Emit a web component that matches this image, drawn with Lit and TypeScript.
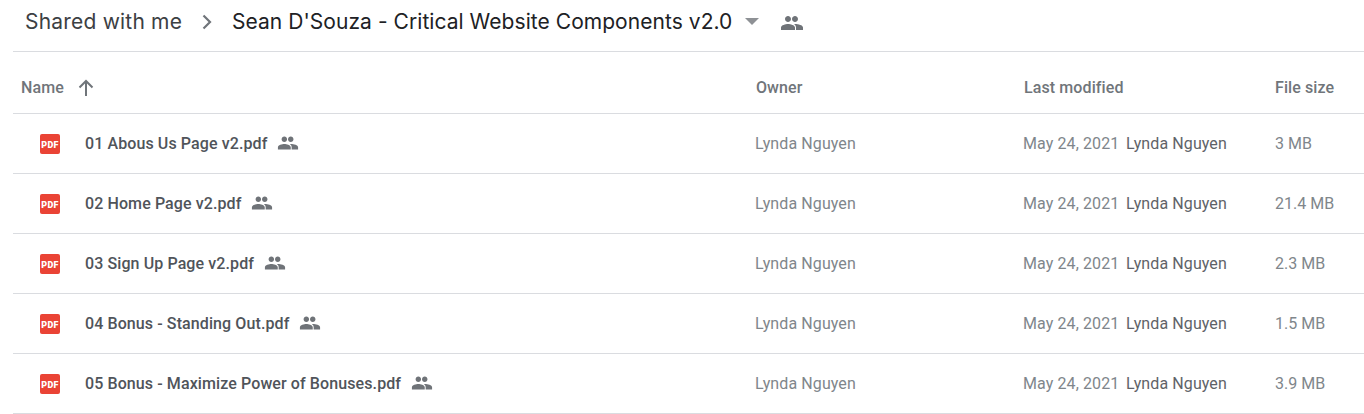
import { LitElement, html, css } from "lit";
import { customElement } from "lit/decorators.js";

const people = (size: number, cls = "") => html`<svg class=${cls} width=${size} height=${size} viewBox="0 0 24 24" fill="#6f7378"><path d="M15 11c1.66 0 2.99-1.34 2.99-3S16.66 5 15 5s-3 1.34-3 3 1.34 3 3 3zm-7 0c1.66 0 2.99-1.34 2.99-3S9.66 5 8 5 5 6.34 5 8s1.34 3 3 3zm0 2c-2.33 0-7 1.17-7 3.5V19h14v-2.5C15 14.17 10.33 13 8 13zm7 0c-.29 0-.62.02-.97.05 1.16.84 1.97 1.97 1.97 3.45V19h7v-2.5c0-2.33-4.67-3.5-8-3.5z"/></svg>`;

const pdf = html`<svg width="20" height="20" viewBox="0 0 20 20"><rect width="20" height="20" rx="2" fill="#ea4335"/><text x="10" y="13.500" text-anchor="middle" font-family="Roboto, sans-serif" font-size="9" font-weight="900" fill="#fff" letter-spacing="0.3">PDF</text></svg>`;

const files = [
  ["01 Abous Us Page v2.pdf", "3 MB"],
  ["02 Home Page v2.pdf", "21.4 MB"],
  ["03 Sign Up Page v2.pdf", "2.3 MB"],
  ["04 Bonus - Standing Out.pdf", "1.5 MB"],
  ["05 Bonus - Maximize Power of Bonuses.pdf", "3.9 MB"],
];

@customElement("app-root")
export class AppRoot extends LitElement {
  static styles = css`
    :host { display: block; width: 1364px; height: 414px; overflow: hidden; background: #fff; font-family: Roboto, sans-serif; }
    .crumbs { height: 43px; padding-bottom: 8px; margin-left: 13px; padding-left: 12px; display: flex; align-items: center; border-bottom: 1px solid #dadce0; font-family: Inter, "Open Sans", sans-serif; font-size: 21px; }
    .parent { color: #3c4043; width: 158px; white-space: nowrap; letter-spacing: 0.2px; }
    .chev { margin-left: 18px; margin-right: 19px; display: block; }
    .current { color: #202124; white-space: nowrap; letter-spacing: 0.05px; }
    .caret { margin-left: 13px; width: 0; height: 0; border-left: 7px solid transparent; border-right: 7px solid transparent; border-top: 7px solid #8e9195; }
    .share { margin-left: 21px; display: block; margin-top: 2px; }
    .row { display: grid; grid-template-columns: 742px 268px 103px 1fr; margin-left: 13px; height: 59px; align-items: center; border-bottom: 1px solid #dadce0; font-size: 16px; letter-spacing: 0.1px; color: #80868b; white-space: nowrap; }
    .head { height: 51px; padding-top: 10px; font-weight: 500; color: #70757a; }
    .head .name { padding-left: 8px; display: flex; align-items: center; gap: 12px; }
    .head .owner { padding-left: 1px; }
    .head .mod { grid-column: 3 / span 2; display: flex; padding-left: 1px; }
    .head .mod span:first-child { width: 251px; }
    .file { padding-left: 27px; display: flex; align-items: center; color: #50545a; font-weight: 500; }
    .file .t { margin-left: 25px; }
    .file .p { margin-left: 10px; display: block; margin-top: -2px; }
    .last { display: flex; }
    .by { color: #5f6368; width: 149px; }
    .size { letter-spacing: 0; }
    .arrow { display: block; }
  `;

  render() {
    return html`
      <div class="crumbs">
        <span class="parent">Shared with me</span>
        <svg class="chev" width="12" height="16" viewBox="0 0 12 16"><path d="M2.500 1.500 9 8l-6.500 6.500" fill="none" stroke="#70757a" stroke-width="2.2"/></svg>
        <span class="current">Sean D'Souza - Critical Website Components v2.0</span>
        <span class="caret"></span>
        ${people(24, "share")}
      </div>
      <div class="row head">
        <div class="name">Name <svg class="arrow" width="20" height="20" viewBox="0 0 20 20"><path d="M10 18V3M3.500 9.500 10 3l6.500 6.500" fill="none" stroke="#70757a" stroke-width="2"/></svg></div>
        <div class="owner">Owner</div>
        <div class="mod"><span>Last modified</span><span>File size</span></div>
      </div>
      ${files.map(([n, s]) => html`
        <div class="row">
          <div class="file">${pdf}<span class="t">${n}</span>${people(22, "p")}</div>
          <div>Lynda Nguyen</div>
          <div>May 24, 2021</div>
          <div class="last"><span class="by">Lynda Nguyen</span><span class="size">${s}</span></div>
        </div>`)}
    `;
  }
}
